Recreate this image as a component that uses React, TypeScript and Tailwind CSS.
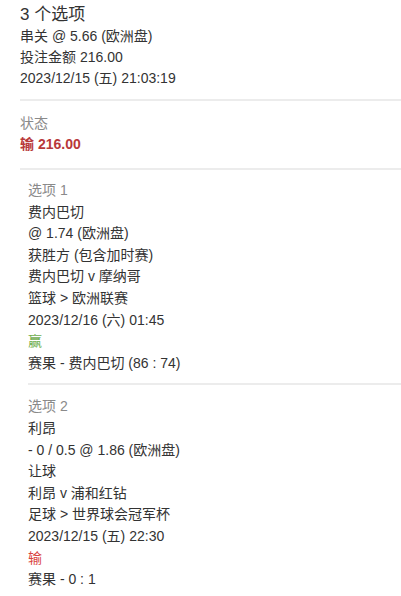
const font = { fontFamily: '"Liberation Sans", Arial, "Noto Sans CJK SC", sans-serif' };

type Leg = {
  title: string;
  lines: string[];
  date: string;
  result: "win" | "lose";
  score: string;
};

const legs: Leg[] = [
  {
    title: "选项 1",
    lines: ["费内巴切", "@ 1.74 (欧洲盘)", "获胜方 (包含加时赛)", "费内巴切 v 摩纳哥", "篮球 > 欧洲联赛"],
    date: "2023/12/16 (六) 01:45",
    result: "win",
    score: "赛果 - 费内巴切 (86 : 74)",
  },
  {
    title: "选项 2",
    lines: ["利昂", "- 0 / 0.5 @ 1.86 (欧洲盘)", "让球", "利昂 v 浦和红钻", "足球 > 世界球会冠军杯"],
    date: "2023/12/15 (五) 22:30",
    result: "lose",
    score: "赛果 - 0 : 1",
  },
];

function LegBlock({ leg, first }: { leg: Leg; first: boolean }) {
  return (
    <div
      className={
        "ml-2 text-[14px] leading-[21.6px] text-[#333] " +
        (first ? "border-b-2 border-[#ececec] pt-[10px] pb-[9px]" : "pt-[11px] pb-4")
      }
    >
      <div className="text-[#8a8a8a]">{leg.title}</div>
      {leg.lines.map((l) => (
        <div key={l}>{l}</div>
      ))}
      <div>{leg.date}</div>
      {leg.result === "win" ? (
        <div className="text-[#6fae4f]">赢</div>
      ) : (
        <div className="text-[#d9453f]">输</div>
      )}
      <div>{leg.score}</div>
    </div>
  );
}

export default function App() {
  return (
    <div className="min-h-[596px] bg-white pl-5" style={font}>
      <div className="border-b-2 border-[#ececec] pt-[4px] pb-[10px] text-[14px] leading-[21px] text-[#333]">
        <div className="text-[17px] leading-[22px]">3 个选项</div>
        <div>串关 @ 5.66 (欧洲盘)</div>
        <div>投注金额 216.00</div>
        <div>2023/12/15 (五) 21:03:19</div>
      </div>

      <div className="border-b-2 border-[#ececec] pt-[12px] pb-[13px] text-[14px] leading-[21px]">
        <div className="text-[#8a8a8a]">状态</div>
        <div className="font-bold text-[#b8383a]">输 216.00</div>
      </div>

      {legs.map((leg, i) => (
        <LegBlock key={leg.title} leg={leg} first={i === 0} />
      ))}
    </div>
  );
}
